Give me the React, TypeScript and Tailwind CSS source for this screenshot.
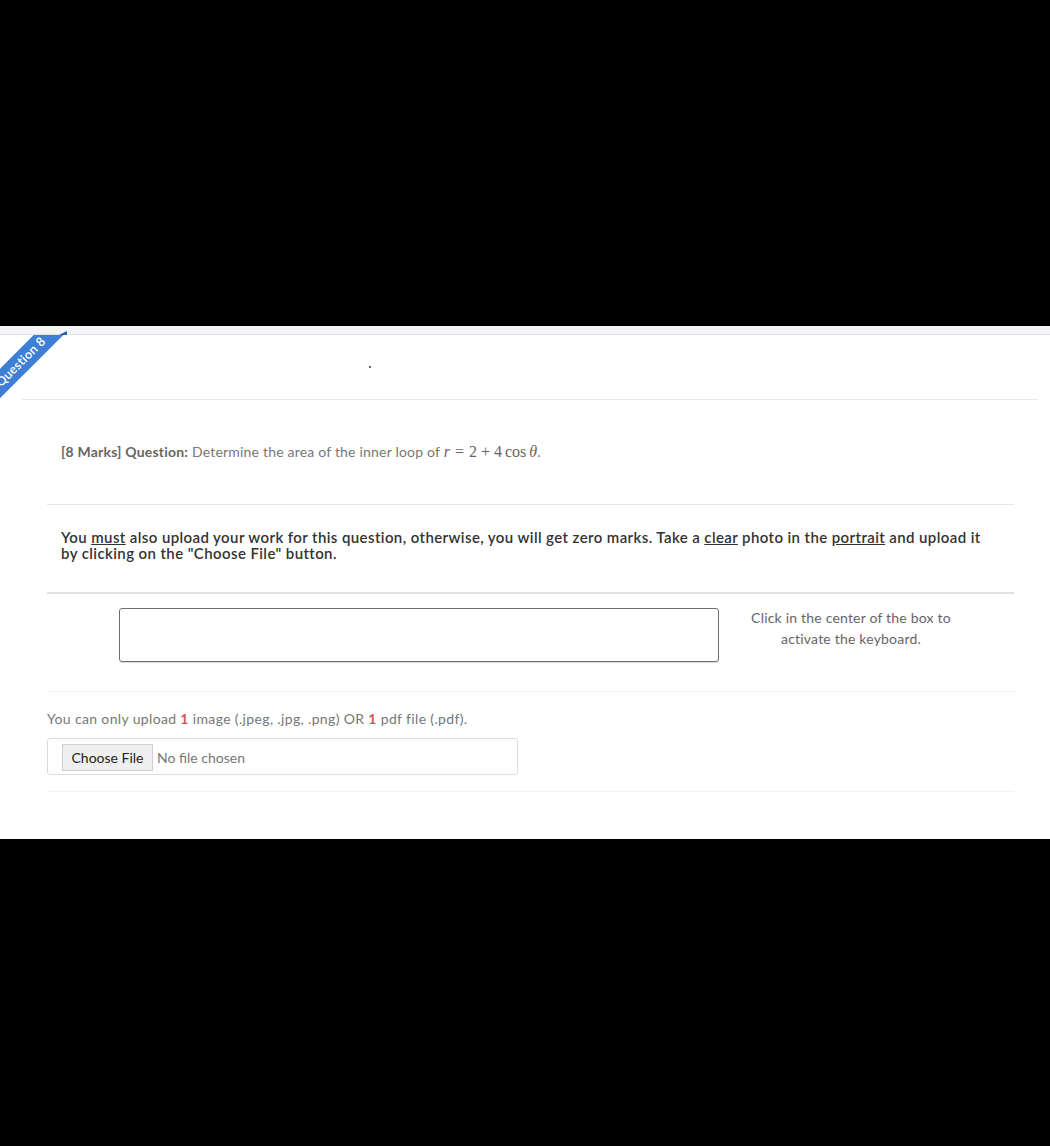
import React from "react";

function Ribbon() {
  return (
    <div className="pointer-events-none absolute left-0 top-0 h-[80px] w-[90px] overflow-hidden">
      <div className="absolute left-[-56px] top-[14px] flex h-[21px] w-[160px] -rotate-45 items-center justify-center bg-[#3e7fd6] pr-[8px] text-[12.5px] font-semibold tracking-[0.3px] text-white">
        Question 8
      </div>
    </div>
  );
}

function MathExpr() {
  return (
    <span className="font-['Liberation_Serif',serif] text-[16px] tracking-normal text-[#666]">
      <i>r</i>
      <span className="mx-[5px]">=</span>2<span className="mx-[4px]">+</span>4<span className="ml-[3px]">cos</span>
      <i className="ml-[3px]">θ</i>
    </span>
  );
}

export default function App() {
  return (
    <div className="min-h-[1146px] bg-black font-['Lato',sans-serif]">
      <div className="h-[326px]" />
      <div className="relative bg-white">
        {/* top strip with ribbon fold */}
        <div className="relative h-[9px] border-b border-[#e3e3e5] bg-[#f4f4f6]">
          <div className="absolute left-[59px] top-[5px] h-0 w-0 border-b-[4px] border-l-[8px] border-b-[#2c5da3] border-l-transparent" />
        </div>
        <div className="relative">
          <Ribbon />
          <div className="ml-[22px] mr-[12px] flex h-[65px] items-center border-b border-[#e8e8e8] pl-[347px]">
            <span className="h-[2px] w-[2px] bg-[#666]" />
          </div>

          <div className="ml-[47px] mr-[36px]">
            <div className="flex h-[105px] items-start border-b border-[#e6e6e6] pl-[14px] pt-[40px] text-[14px] tracking-[0.2px] text-[#777]">
              <span>
                <span className="font-bold text-[#666]">[8 Marks] Question:</span> Determine the area of the inner loop of{" "}
                <MathExpr />.
              </span>
            </div>

            <div className="h-[89px] border-b-2 border-[#e1e1e1] pl-[14px] pt-[24px] text-[15px] font-semibold leading-[16px] tracking-[0.4px] text-[#333]">
              You <u>must</u> also upload your work for this question, otherwise, you will get zero marks. Take a{" "}
              <u>clear</u> photo in the <u>portrait</u> and upload it
              <br />
              by clicking on the "Choose File" button.
            </div>

            <div className="flex h-[98px] border-b border-[#f3f3f3] pt-[14px]">
              <div className="ml-[72px] h-[54px] w-[600px] rounded-[3px] border border-[#6f6f6f] shadow-[0_1px_1px_rgba(0,0,0,0.15)]" />
              <div className="-mt-[1px] ml-[12px] w-[240px] text-center text-[14px] leading-[21px] tracking-[0.2px] text-[#666]">
                Click in the center of the box to
                <br />
                activate the keyboard.
              </div>
            </div>

            <div className="pt-[16px] text-[14px] tracking-[0.35px] text-[#777]">
              You can only upload <span className="font-bold text-[#d9534f]">1</span> image (.jpeg, .jpg, .png) OR{" "}
              <span className="font-bold text-[#d9534f]">1</span> pdf file (.pdf).
            </div>

            <div className="mt-[9px] flex h-[37px] w-[471px] items-center rounded-[3px] border border-[#dcdcdc] pl-[14px] pt-[2px]">
              <div className="flex h-[27px] w-[91px] items-center justify-center border border-[#cfcfcf] bg-[#efefef] text-[14px] text-[#222]">
                Choose File
              </div>
              <span className="ml-[4px] text-[14px] text-[#777]">No file chosen</span>
            </div>

            <div className="h-[17px] border-b border-[#f3f3f3]" />
          </div>
          <div className="h-[47px]" />
        </div>
      </div>
    </div>
  );
}
